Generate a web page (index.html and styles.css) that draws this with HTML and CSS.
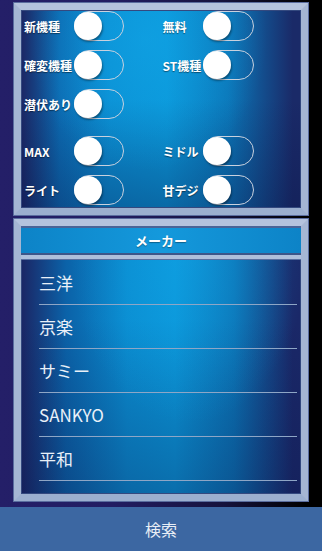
FILE: index.html
```html
<!DOCTYPE html>
<html lang="ja">
<head>
    <meta charset="UTF-8">
    <title>機種検索</title>
    <meta name="viewport" content="width=device-width, initial-scale=1.0">
    <link rel="stylesheet" href="styles.css">
</head>
<body>
    <!-- 条件スイッチ -->
    <div class="panel filter-panel">
        <div class="switch-row">
            <div class="cell"><span class="cell-label">新機種</span><span class="toggle"></span></div>
            <div class="cell right"><span class="cell-label">無料</span><span class="toggle"></span></div>
        </div>
        <div class="switch-row">
            <div class="cell"><span class="cell-label">確変機種</span><span class="toggle"></span></div>
            <div class="cell right"><span class="cell-label">ST機種</span><span class="toggle"></span></div>
        </div>
        <div class="switch-row">
            <div class="cell"><span class="cell-label">潜伏あり</span><span class="toggle"></span></div>
        </div>
        <div class="switch-row spaced">
            <div class="cell"><span class="cell-label">MAX</span><span class="toggle"></span></div>
            <div class="cell right"><span class="cell-label">ミドル</span><span class="toggle"></span></div>
        </div>
        <div class="switch-row">
            <div class="cell"><span class="cell-label">ライト</span><span class="toggle"></span></div>
            <div class="cell right"><span class="cell-label">甘デジ</span><span class="toggle"></span></div>
        </div>
    </div>

    <!-- メーカー一覧 -->
    <div class="panel maker-panel">
        <div class="maker-title">メーカー</div>
        <div class="maker-divider"></div>
        <ul class="maker-list">
            <li>三洋</li>
            <li>京楽</li>
            <li>サミー</li>
            <li>SANKYO</li>
            <li>平和</li>
        </ul>
    </div>

    <div class="search-bar">検索</div>
</body>
</html>
```

FILE: styles.css
```css
html, body {
    margin: 0;
    padding: 0;
}
body {
    width: 322px;
    height: 551px;
    overflow: hidden;
    background: linear-gradient(to right, #241f68 0%, #221d62 35%, #15123c 70%, #000 95%);
    font-family: "Noto Sans CJK JP", "Noto Sans", sans-serif;
    color: #fff;
}
.panel {
    margin: 3px 14px 0 14px;
    border: 7px solid #a5b6d3;
    border-top-color: #b4c3dd;
    border-bottom-color: #9bafcf;
    box-shadow: inset 0 0 0 1px #34497f, 0 0 0 1px #5a6d9f;
}
.filter-panel {
    height: 197px;
    box-sizing: content-box;
    padding-top: 1px;
    background:
        radial-gradient(ellipse at 45% 15%, rgba(20, 170, 235, 0.45) 0%, rgba(20, 170, 235, 0) 55%),
        linear-gradient(to bottom, rgba(10, 20, 70, 0) 45%, rgba(10, 20, 70, 0.35) 100%),
        linear-gradient(to right, #1c2664 0%, #0c6cb3 14%, #0a8fd3 32%, #0a97d9 52%, #0b76b8 74%, #1a2a68 97%);
}
.switch-row {
    display: flex;
    height: 30px;
    margin-bottom: 9px;
    padding-left: 3px;
}
.switch-row.spaced {
    margin-top: 17px;
}
.cell {
    display: flex;
    align-items: center;
    width: 139px;
}
.cell-label {
    width: 50px;
    font-size: 12px;
    font-weight: bold;
    white-space: nowrap;
    text-shadow: 0 1px 1px rgba(0, 0, 0, 0.45);
}
.cell.right .cell-label {
    width: 40px;
}
.toggle {
    position: relative;
    box-sizing: border-box;
    width: 50px;
    height: 30px;
    border: 1.5px solid #c9d1de;
    border-radius: 15px;
}
.cell.right .toggle {
    width: 51px;
}
.toggle::after {
    content: "";
    position: absolute;
    left: -1px;
    top: 0;
    width: 28px;
    height: 28px;
    margin-top: -0.5px;
    border-radius: 50%;
    background: #fff;
    box-shadow: 1px 2px 2px rgba(0, 0, 0, 0.35);
}
.maker-panel {
    margin-top: 4px;
    background:
        radial-gradient(ellipse at 60% 10%, rgba(20, 170, 235, 0.4) 0%, rgba(20, 170, 235, 0) 50%),
        linear-gradient(to bottom, rgba(10, 20, 70, 0) 35%, rgba(10, 20, 70, 0.3) 100%),
        linear-gradient(to right, #1b2564 0%, #0b62a8 16%, #0a8cd0 38%, #0a95d8 55%, #0b72b4 76%, #1a2868 97%);
}
.maker-title {
    height: 25px;
    line-height: 25px;
    text-align: center;
    font-size: 13px;
    font-weight: bold;
    border-top: 2px solid #4b6497;
    border-bottom: 2px solid #3d5689;
    background: linear-gradient(to right, #0d83c7, #1499dc 50%, #0d83c7);
    text-shadow: 0 1px 1px rgba(0, 0, 0, 0.35);
}
.maker-divider {
    height: 4px;
    background: #aebfdb;
    border-bottom: 1px solid #5a6f9f;
}
.maker-list {
    list-style: none;
    margin: 0;
    padding: 1px 0 13px 0;
}
.maker-list li {
    height: 43px;
    line-height: 43px;
    margin: 0 4px 0 18px;
    border-bottom: 1px solid #8ea6c6;
    font-size: 17px;
    color: #e9f0f8;
}
.search-bar {
    margin-top: 6px;
    height: 45px;
    line-height: 45px;
    text-align: center;
    background: #3c67a2;
    font-size: 16px;
    color: #e8eef6;
}
```
